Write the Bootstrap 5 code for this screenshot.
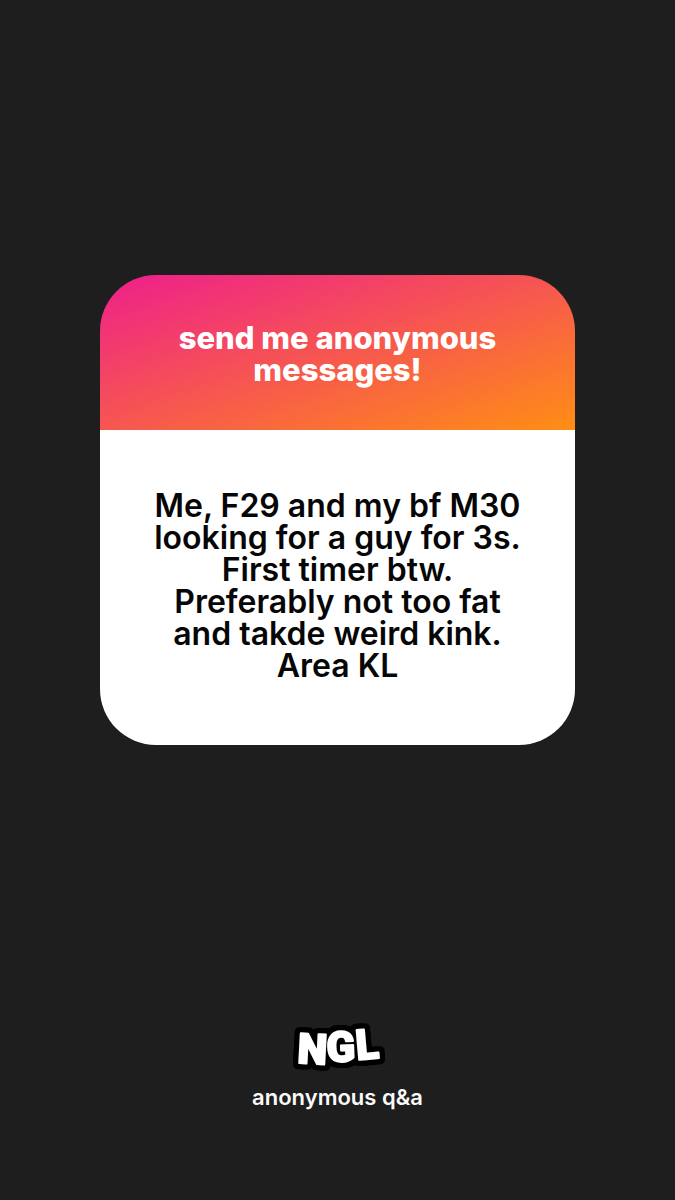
<!DOCTYPE html>
<html lang="en">
<head>
<meta charset="utf-8">
<meta name="viewport" content="width=device-width, initial-scale=1">
<title>NGL – anonymous q&amp;a</title>
<link href="https://cdn.jsdelivr.net/npm/bootstrap@5.3.0/dist/css/bootstrap.min.css" rel="stylesheet">
<style>
  body { background: #1e1e1e; font-family: Inter, "Liberation Sans", sans-serif; }
  .question-card { max-width: 475px; border-radius: 56px; --bs-card-border-width: 0; --bs-card-bg: transparent; }
  .question-head { background: linear-gradient(to bottom right, #ee1f8c, #ff8e14); padding: 47px 48px 44px; }
  .question-head h1 { font-size: 31px; line-height: 32px; font-weight: 800; }
  .question-body { padding: 60px 48px 63px; }
  .question-body p { font-size: 32px; line-height: 32px; font-weight: 600; color: #060606; }
  .brand-footer { padding-bottom: 90px; }
  .brand-logo {
    overflow: visible;
    filter: drop-shadow(3px 0 0 #000) drop-shadow(-3px 0 0 #000) drop-shadow(0 3px 0 #000) drop-shadow(0 -3px 0 #000)
            drop-shadow(1px 1px 0 #000) drop-shadow(-1px -1px 0 #000) drop-shadow(1px -1px 0 #000) drop-shadow(-1px 1px 0 #000);
  }
  .brand-logo text { font-family: Roboto, sans-serif; font-weight: 900; font-size: 42px; fill: #fff; stroke: #fff; stroke-width: 2px; stroke-linejoin: round; }
  .brand-tagline { font-size: 22px; line-height: 26px; font-weight: 600; color: #fafafa; }
</style>
</head>
<body class="d-flex flex-column min-vh-100">
  <main class="flex-grow-1 d-flex align-items-center justify-content-center px-3">
    <article class="card question-card w-100 overflow-hidden text-center">
      <header class="question-head text-white">
        <h1 class="m-0">send me anonymous messages!</h1>
      </header>
      <div class="question-body bg-white">
        <p class="m-0">Me, F29 and my bf M30<br>looking for a guy for 3s.<br>First timer btw.<br>Preferably not too fat<br>and takde weird kink.<br>Area KL</p>
      </div>
    </article>
  </main>
  <footer class="brand-footer d-flex flex-column align-items-center gap-2">
    <svg class="brand-logo" width="96" height="56" viewBox="0 0 96 56" role="img" aria-label="NGL">
      <text x="7 37 67" y="43 42 40" rotate="3 -2 -5">NGL</text>
    </svg>
    <p class="brand-tagline m-0">anonymous q&amp;a</p>
  </footer>
<script src="https://cdn.jsdelivr.net/npm/bootstrap@5.3.0/dist/js/bootstrap.bundle.min.js"></script>
</body>
</html>
